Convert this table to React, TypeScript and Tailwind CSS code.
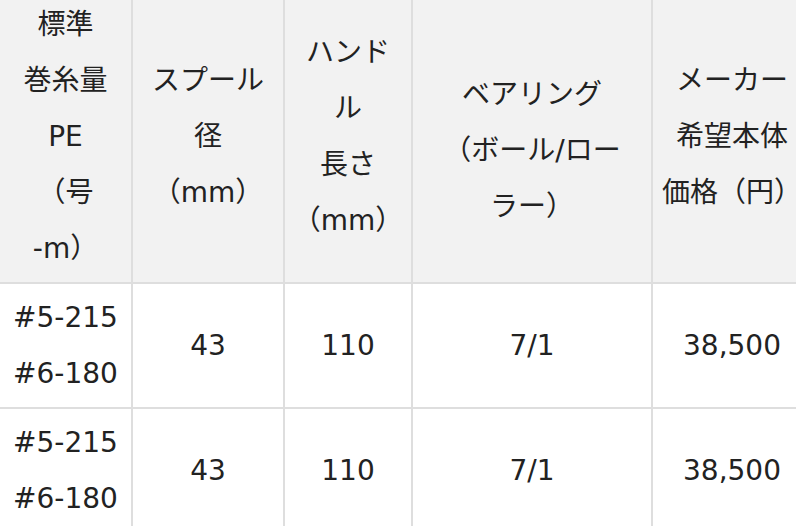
import React from 'react';

const FONT = '[font-family:"DejaVu_Sans","Noto_Sans_CJK_JP",sans-serif]';

// 見出しは原本どおりの改行位置で固定
const headers: { lines: string[]; shift?: boolean }[] = [
  { lines: ['標準', '巻糸量', 'PE', '（号', '-m）'] },
  { lines: ['スプール', '径', '（mm）'] },
  { lines: ['ハンド', 'ル', '長さ', '（mm）'] },
  { lines: ['ベアリング', '（ボール/ロー', 'ラー）'], shift: true },
  { lines: ['メーカー', '希望本体', '価格（円）'] },
];

const rows = [
  { line: ['#5-215', '#6-180'], spool: '43', handle: '110', bearing: '7/1', price: '38,500' },
  { line: ['#5-215', '#6-180'], spool: '43', handle: '110', bearing: '7/1', price: '38,500' },
];

const Cell = ({ children }: { children: React.ReactNode }) => (
  <div className="flex h-[123px] flex-col items-center justify-center bg-white text-center">
    {children}
  </div>
);

const App = () => {
  return (
    <div className={`h-[526px] w-[796px] overflow-hidden bg-white text-[28px] leading-[56px] text-[#222] ${FONT}`}>
      <div className="grid w-[813px] grid-cols-[131px_150px_126px_238px_158px] gap-[2px] bg-[#dedede] pr-[2px]">
        {headers.map((h, i) => (
          <div
            key={i}
            className={`flex h-[282px] flex-col items-center justify-center whitespace-nowrap bg-[#f2f2f2] text-center ${
              h.shift ? 'pt-[20px]' : 'pb-[8px]'
            }`}
          >
            {h.lines.map((l) => (
              <span key={l}>{l}</span>
            ))}
          </div>
        ))}

        {rows.map((r, i) => (
          <React.Fragment key={i}>
            <Cell>
              {r.line.map((l) => (
                <span key={l}>{l}</span>
              ))}
            </Cell>
            <Cell>{r.spool}</Cell>
            <Cell>{r.handle}</Cell>
            <Cell>{r.bearing}</Cell>
            <Cell>{r.price}</Cell>
          </React.Fragment>
        ))}
      </div>
    </div>
  );
};

export default App;
